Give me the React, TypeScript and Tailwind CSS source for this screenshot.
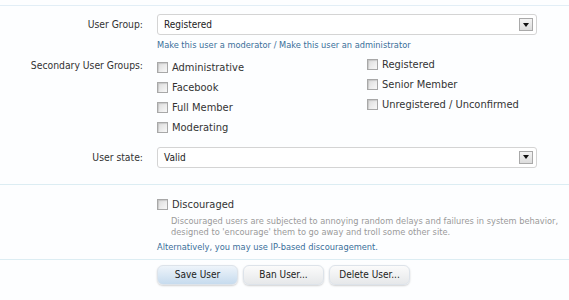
import React from "react";

const font = "font-['DejaVu_Sans_Condensed','DejaVu_Sans',sans-serif]";

function Check({ label }: { label: string }) {
  return (
    <label className="flex items-center gap-[4px] h-[20px] text-[11px] text-[#333]">
      <span className="w-[11px] h-[11px] border border-[#a8a8a8] bg-gradient-to-br from-[#dcdcdc] to-[#f8f8f8] shadow-[inset_1px_1px_1px_rgba(0,0,0,0.12)]" />
      {label}
    </label>
  );
}

function Select({ value }: { value: string }) {
  return (
    <div className="flex items-center w-[380px] h-[21px] border border-[#d4d4d4] rounded-[3px] bg-white pl-[6px] pr-[3px] text-[10px] text-[#222]">
      <span className="flex-1">{value}</span>
      <span className="w-[14px] h-[13px] border border-[#a9a9a9] bg-gradient-to-b from-[#f4f4f4] to-[#dcdcdc] flex items-center justify-center">
        <svg width="6" height="4" viewBox="0 0 6 4">
          <path d="M0 0h6L3 4z" fill="#111" />
        </svg>
      </span>
    </div>
  );
}

function Row({ label, children }: { label?: string; children: React.ReactNode }) {
  return (
    <div className="flex">
      <div className="w-[157px] pr-[14px] text-right text-[10.3px] text-[#333] leading-[21px] shrink-0">{label}</div>
      <div className="flex-1">{children}</div>
    </div>
  );
}

function Button({ children, primary }: { children: React.ReactNode; primary?: boolean }) {
  return (
    <button
      className={
        "h-[20px] w-[81px] rounded-[6px] border border-[#dde3ea] text-[10px] text-[#222] shadow-[0_1px_2px_rgba(0,0,0,0.18)] " +
        (primary
          ? "bg-gradient-to-b from-[#eef4fa] to-[#c6dbee]"
          : "bg-gradient-to-b from-[#fbfbfb] to-[#e6e8ea]")
      }
    >
      {children}
    </button>
  );
}

export default function App() {
  return (
    <div className={`${font} w-[569px] h-[300px] bg-[#fdfeff] overflow-hidden`}>
      <div className="border-t border-[#e2eef6] mt-[5px]" />
      <div className="pt-[8px] pb-[16px]">
        <Row label="User Group:">
          <Select value="Registered" />
          <div className="mt-[3px] text-[9.2px] text-[#3a6f9a]">
            Make this user a moderator / Make this user an administrator
          </div>
        </Row>
        <div className="mt-[3px]">
          <Row label="Secondary User Groups:">
            <div className="grid grid-cols-[210px_1fr]">
              <div className="pt-[3px]">
                <Check label="Administrative" />
                <Check label="Facebook" />
                <Check label="Full Member" />
                <Check label="Moderating" />
              </div>
              <div>
                <Check label="Registered" />
                <Check label="Senior Member" />
                <Check label="Unregistered / Unconfirmed" />
              </div>
            </div>
          </Row>
        </div>
        <div className="mt-[9px]">
          <Row label="User state:">
            <Select value="Valid" />
          </Row>
        </div>
      </div>
      <div className="border-t border-[#dcedf3]" />
      <div className="pt-[10px] pb-[6px]">
        <Row>
          <Check label="Discouraged" />
          <div className="pl-[14px] text-[9.2px] leading-[11px] text-[#9a9a9a]">
            <div>Discouraged users are subjected to annoying random delays and failures in system behavior,</div>
            <div>designed to 'encourage' them to go away and troll some other site.</div>
          </div>
          <div className="mt-[4px] text-[9.2px] leading-[12px] text-[#3a6f9a]">
            Alternatively, you may use IP-based discouragement.
          </div>
        </Row>
      </div>
      <div className="border-t border-[#dcedf3]" />
      <div className="pt-[5px]">
        <Row>
          <div className="flex gap-[5px]">
            <Button primary>Save User</Button>
            <Button>Ban User...</Button>
            <Button>Delete User...</Button>
          </div>
        </Row>
      </div>
    </div>
  );
}
